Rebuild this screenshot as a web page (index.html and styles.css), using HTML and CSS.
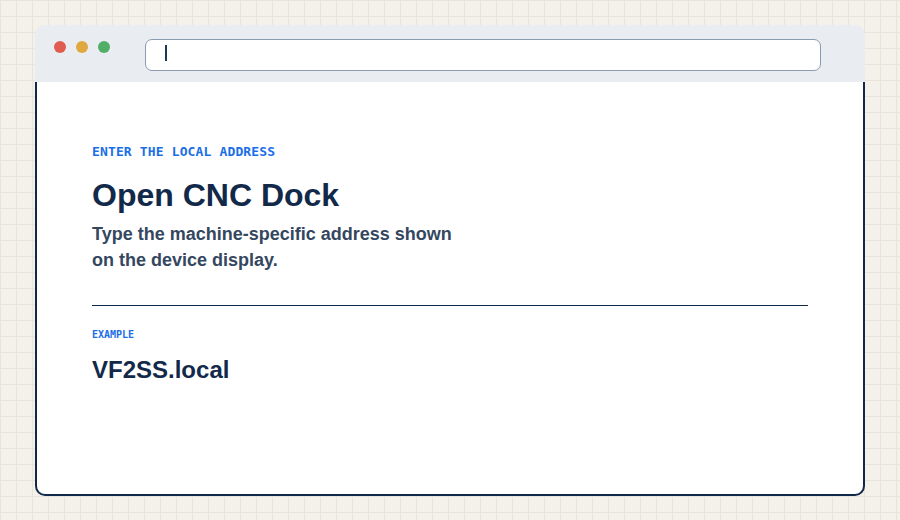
FILE: index.html
```html
<!DOCTYPE html>
<html lang="en">
<head>
<meta charset="utf-8">
<title>Open CNC Dock</title>
<link rel="stylesheet" href="styles.css">
</head>
<body>
  <div class="window">
    <div class="titlebar">
      <div class="dots">
        <span class="dot red"></span>
        <span class="dot yellow"></span>
        <span class="dot green"></span>
      </div>
      <div class="addressbar"><span class="caret"></span></div>
    </div>
    <div class="content">
      <p class="kicker">ENTER THE LOCAL ADDRESS</p>
      <h1 class="title">Open CNC Dock</h1>
      <p class="lead">Type the machine-specific address shown on the device display.</p>
      <hr class="divider">
      <p class="label">EXAMPLE</p>
      <p class="example">VF2SS.local</p>
    </div>
  </div>
</body>
</html>
```

FILE: styles.css
```css
* { box-sizing: border-box; }

html, body {
  margin: 0;
  padding: 0;
}

body {
  width: 900px;
  height: 520px;
  background-color: #f4f1ea;
  background-image:
    linear-gradient(to right, #e8e4db 1px, transparent 1px),
    linear-gradient(to bottom, #e8e4db 1px, transparent 1px);
  background-size: 16px 16px;
  background-position: 0 0;
  padding: 25px 0 0 35px;
  font-family: "Liberation Sans", Arial, sans-serif;
}

.window {
  width: 830px;
  height: 471px;
  display: flex;
  flex-direction: column;
}

.titlebar {
  height: 57px;
  flex: none;
  background: #e9ecf1;
  border-radius: 10px 10px 0 0;
  display: flex;
  align-items: flex-start;
  padding: 14px 44px 0 19px;
}

.dots {
  display: flex;
  gap: 10px;
  margin-top: 2px;
}

.dot {
  width: 12px;
  height: 12px;
  border-radius: 50%;
  display: block;
}
.red { background: #e05c50; }
.yellow { background: #e0a93f; }
.green { background: #51ae66; }

.addressbar {
  flex: 1;
  margin-left: 35px;
  height: 32px;
  background: #ffffff;
  border: 1px solid #8b9bb0;
  border-radius: 7px;
  padding: 5px 0 0 19px;
}

.caret {
  display: block;
  width: 2px;
  height: 16px;
  background: #1d3658;
}

.content {
  flex: 1;
  background: #ffffff;
  border: 2px solid #10294a;
  border-top: none;
  border-radius: 0 0 10px 10px;
  padding: 62px 55px 0 55px;
}

.kicker {
  margin: 0;
  font-family: "DejaVu Sans Mono", "Liberation Mono", monospace;
  font-size: 13px;
  line-height: 16px;
  letter-spacing: 0.14px;
  color: #1a6ee6;
  font-weight: 700;
}

.title {
  margin: 16px 0 0 0;
  font-size: 32px;
  line-height: 38px;
  font-weight: 700;
  color: #12294a;
}

.lead {
  margin: 7px 0 0 0;
  max-width: 380px;
  font-size: 18px;
  line-height: 26px;
  font-weight: 700;
  color: #34475f;
}

.divider {
  margin: 32px 0 0 0;
  border: none;
  border-top: 1px solid #10294a;
  height: 0;
}

.label {
  margin: 23px 0 0 0;
  font-family: "DejaVu Sans Mono", "Liberation Mono", monospace;
  font-size: 10px;
  line-height: 12px;
  font-weight: 700;
  color: #1a6ee6;
}

.example {
  margin: 14px 0 0 0;
  font-size: 24px;
  line-height: 29px;
  font-weight: 700;
  color: #12294a;
}
```
